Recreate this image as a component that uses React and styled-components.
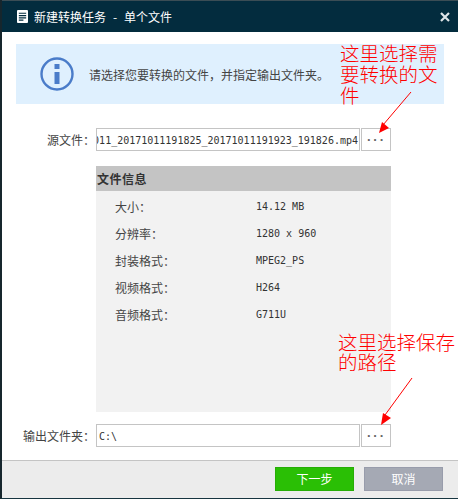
import React from "react";
import styled, { createGlobalStyle } from "styled-components";

const cjk = `"Noto Sans CJK SC", "Liberation Sans", sans-serif`;
const mono = `"DejaVu Sans Mono", "Noto Sans CJK SC", monospace`;

const infoRows = [
  { label: "大小：", value: "14.12 MB" },
  { label: "分辨率：", value: "1280 x 960" },
  { label: "封装格式：", value: "MPEG2_PS" },
  { label: "视频格式：", value: "H264" },
  { label: "音频格式：", value: "G711U" },
];

export default function App() {
  return (
    <>
      <GlobalStyle />
      <Window>
        <TitleBar>
          <TitleIcon viewBox="0 0 12 14">
            <rect width="12" height="14" rx="1" fill="#fff" />
            <path d="M2 3.5h8M2 6h8M2 8.5h8M2 11h5" stroke="#032c3e" strokeWidth="1.2" />
          </TitleIcon>
          <Title>新建转换任务  -  单个文件</Title>
          <CloseIcon viewBox="0 0 10 10">
            <path d="M1 1l8 8M9 1l-8 8" stroke="#dfe5e8" strokeWidth="2.2" />
          </CloseIcon>
        </TitleBar>

        <Body>
          <Banner>
            <InfoIcon viewBox="0 0 34 34">
              <circle cx="17" cy="17" r="15.5" fill="none" stroke="#4a7cc9" strokeWidth="2.4" />
              <rect x="14.5" y="7" width="5" height="5" fill="#4a7cc9" />
              <rect x="14.5" y="15" width="5" height="12" fill="#4a7cc9" />
            </InfoIcon>
            <BannerText>请选择您要转换的文件，并指定输出文件夹。</BannerText>
          </Banner>

          <FieldRow $top={24}>
            <FieldLabel>源文件：</FieldLabel>
            <PathBox $alignEnd>
              <PathText>011_20171011191825_20171011191923_191826.mp4</PathText>
            </PathBox>
            <BrowseButton>···</BrowseButton>
          </FieldRow>

          <InfoPanel>
            <InfoHeader>文件信息</InfoHeader>
            <InfoList>
              {infoRows.map((row) => (
                <InfoRow key={row.label}>
                  <InfoLabel>{row.label}</InfoLabel>
                  <InfoValue>{row.value}</InfoValue>
                </InfoRow>
              ))}
            </InfoList>
          </InfoPanel>

          <FieldRow $top={12}>
            <FieldLabel>输出文件夹：</FieldLabel>
            <PathBox>
              <PathText>C:\</PathText>
            </PathBox>
            <BrowseButton>···</BrowseButton>
          </FieldRow>
        </Body>

        <Footer>
          <FooterButton $bg="#2abf05" $border="#27ad06">下一步</FooterButton>
          <FooterButton $bg="#a5a9b4" $border="#989cab">取消</FooterButton>
        </Footer>

        <Note $left={340} $top={42} $width={102} $leading={21}>这里选择需要转换的文件</Note>
        <Note $left={338} $top={332} $width={120} $leading={20}>这里选择保存的路径</Note>
        <Arrow viewBox="0 0 458 499">
          <path d="M411 92L383 125" stroke="#f00" strokeWidth="1" fill="none" />
          <path d="M379 133l3-11 7 6z" fill="#f00" />
          <path d="M412 378L385 415" stroke="#f00" strokeWidth="1" fill="none" />
          <path d="M381 425l2-12 8 5z" fill="#f00" />
        </Arrow>
      </Window>
    </>
  );
}

const GlobalStyle = createGlobalStyle`
  html, body {
    margin: 0;
    padding: 0;
    background: #fff;
  }
`;

const Window = styled.div`
  position: relative;
  width: 458px;
  height: 499px;
  box-sizing: border-box;
  display: flex;
  flex-direction: column;
  background: #fff;
  border-left: 2px solid #16262d;
  border-bottom: 1px solid #173540;
  overflow: hidden;
  font-family: ${cjk};
  font-size: 12px;
  color: #444;
`;

const TitleBar = styled.div`
  height: 32px;
  flex: none;
  display: flex;
  align-items: center;
  padding: 0 8px 0 15px;
  background: #032c3e;
  border-top: 1px solid #3b4d55;
  box-sizing: border-box;
`;

const TitleIcon = styled.svg`
  width: 11px;
  height: 13px;
`;

const Title = styled.div`
  margin-left: 6px;
  flex: 1;
  color: #fff;
  white-space: pre;
  word-spacing: 0.75px;
`;

const CloseIcon = styled.svg`
  width: 10px;
  height: 10px;
`;

const Body = styled.div`
  flex: 1;
  display: flex;
  flex-direction: column;
  padding: 12px 14px 0 14px;
`;

const Banner = styled.div`
  height: 60px;
  display: flex;
  align-items: center;
  padding-left: 24px;
  background: #dff0fe;
`;

const InfoIcon = styled.svg`
  width: 34px;
  height: 34px;
  flex: none;
`;

const BannerText = styled.div`
  margin-left: 15px;
  white-space: nowrap;
`;

const FieldRow = styled.div`
  display: flex;
  align-items: stretch;
  height: 23px;
  margin-top: ${(p) => p.$top}px;
`;

const FieldLabel = styled.div`
  width: 80px;
  flex: none;
  box-sizing: border-box;
  padding-right: 1px;
  text-align: right;
  line-height: 23px;
`;

const PathBox = styled.div`
  width: 264px;
  flex: none;
  box-sizing: border-box;
  display: flex;
  align-items: center;
  justify-content: ${(p) => (p.$alignEnd ? "flex-end" : "flex-start")};
  padding: 1px 1px 0 2px;
  border: 1px solid #c4c4c4;
  overflow: hidden;
`;

const PathText = styled.span`
  font-family: ${mono};
  font-size: 10px;
  white-space: nowrap;
  flex: none;
  color: #333;
`;

const BrowseButton = styled.div`
  width: 30px;
  flex: none;
  margin-left: 1px;
  box-sizing: border-box;
  border: 1px solid #c4c4c4;
  padding-left: 1px;
  text-align: center;
  line-height: 21px;
  font-family: "Liberation Sans", sans-serif;
  font-size: 13px;
  font-weight: 700;
  letter-spacing: 2px;
  color: #666;
`;

const InfoPanel = styled.div`
  width: 295px;
  height: 246px;
  margin: 15px 0 0 80px;
  background: #f2f2f2;
`;

const InfoHeader = styled.div`
  height: 25px;
  line-height: 25px;
  padding-left: 1px;
  background: #c4c4c4;
  font-weight: 700;
  font-size: 12px;
  letter-spacing: 0.5px;
  color: #333;
`;

const InfoList = styled.div`
  padding-top: 2px;
`;

const InfoRow = styled.div`
  display: flex;
  height: 27px;
  align-items: center;
  padding-left: 19px;
`;

const InfoLabel = styled.div`
  width: 141px;
  flex: none;
`;

const InfoValue = styled.div`
  font-family: ${mono};
  font-size: 10px;
  color: #333;
`;

const Footer = styled.div`
  height: 38px;
  flex: none;
  box-sizing: border-box;
  display: flex;
  justify-content: flex-end;
  align-items: flex-start;
  gap: 10px;
  padding: 6px 15px 0 0;
  background: #ececec;
  border-top: 1px solid #c4c4c4;
`;

const FooterButton = styled.div`
  width: 79px;
  height: 24px;
  box-sizing: border-box;
  background: ${(p) => p.$bg};
  border: 1px solid ${(p) => p.$border};
  color: #fff;
  text-align: center;
  line-height: 22px;
`;

const Note = styled.div`
  position: absolute;
  left: ${(p) => p.$left - 2}px;
  top: ${(p) => p.$top}px;
  width: ${(p) => p.$width}px;
  font-size: 19.5px;
  line-height: ${(p) => p.$leading}px;
  color: #f00;
  font-weight: 300;
`;

const Arrow = styled.svg`
  position: absolute;
  left: -2px;
  top: 0;
  width: 458px;
  height: 499px;
  pointer-events: none;
`;
